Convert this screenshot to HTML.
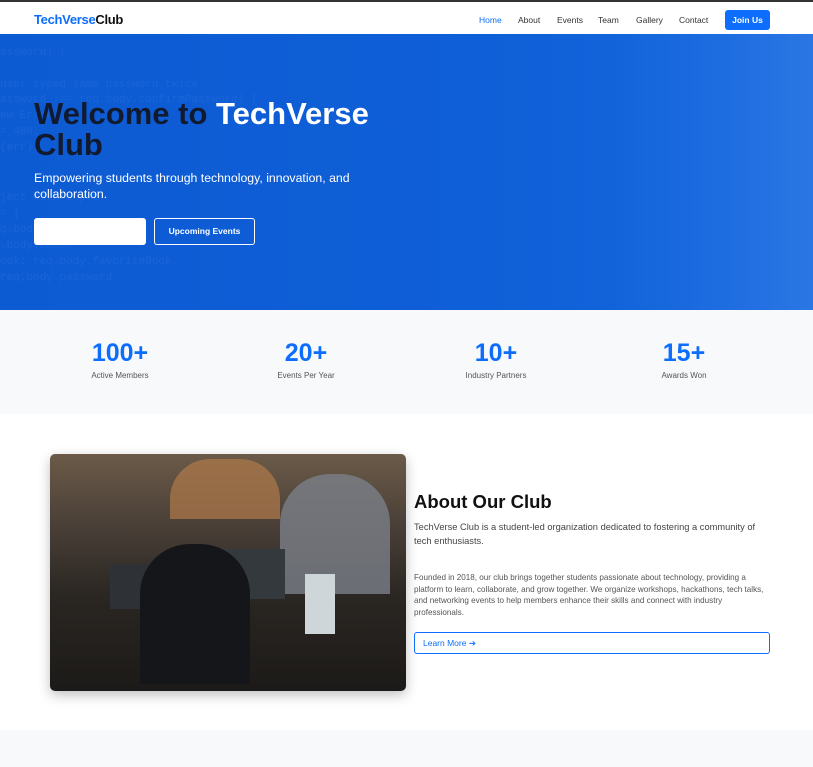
<!DOCTYPE html>
<html><head><style>
*{margin:0;padding:0;box-sizing:border-box}
body{width:813px;height:767px;overflow:hidden;font-family:"Liberation Sans",sans-serif;background:#fff;position:relative}
.top{position:absolute;left:0;top:0;width:813px;height:2px;background:#333}
nav{position:absolute;top:2px;left:0;width:813px;height:32px;background:#fff}
.logo{position:absolute;left:34px;top:10px;font-size:13px;font-weight:bold;color:#111;letter-spacing:-.3px}
.logo span{color:#0d6efd}
.links{position:absolute;top:13px;font-size:8.5px;color:#333}
.join{position:absolute;left:725px;top:8px;width:45px;height:20px;background:#0d6efd;border-radius:3px;color:#fff;font-size:8.5px;font-weight:bold;text-align:center;line-height:20px}
.hero{position:absolute;top:34px;left:0;width:813px;height:276px;background:linear-gradient(90deg,#0d5bd3 0%,#0f5fd8 60%,#1263da 75%,#1d6ce0 88%,#2a76e4 100%)}
.code{position:absolute;left:0;font-family:"Liberation Mono",monospace;font-size:11px;color:rgba(255,255,255,.05)}
h1{position:absolute;left:34px;top:98px;font-size:31px;line-height:31px;color:#111a2e;font-weight:bold}
h1 span{color:#fff}
.sub{position:absolute;left:34px;top:170px;width:350px;font-size:12.3px;line-height:16px;color:#fff}
.b1{position:absolute;left:34px;top:218px;width:112px;height:27px;background:#fff;border-radius:3px}
.b2{position:absolute;left:154px;top:218px;width:101px;height:27px;border:1px solid #fff;border-radius:3px;color:#fff;font-size:8.5px;font-weight:bold;text-align:center;line-height:25px}
.stats{position:absolute;top:310px;left:0;width:813px;height:104px;background:#f8f9fb}
.st{position:absolute;top:29px;width:160px;text-align:center}
.st b{display:block;font-size:25px;color:#0d6efd;line-height:28px}
.st i{display:block;font-style:normal;font-size:8px;color:#555;margin-top:4px}
.img{position:absolute;left:50px;top:454px;width:356px;height:237px;border-radius:5px;box-shadow:0 4px 12px rgba(0,0,0,.25);overflow:hidden;background:linear-gradient(180deg,#6b5a48 0%,#4a4038 30%,#2a2622 60%,#1c1a18 100%)}
h2{position:absolute;left:414px;top:491px;font-size:18.5px;color:#111;font-weight:bold}
.p1{position:absolute;left:414px;top:520px;width:360px;font-size:9.3px;line-height:14px;color:#444}
.p2{position:absolute;left:414px;top:572px;width:356px;font-size:8.1px;line-height:11.6px;color:#555}
.lm{position:absolute;left:414px;top:632px;width:356px;height:22px;border:1px solid #0d6efd;border-radius:3px;font-size:8.5px;color:#0d6efd;line-height:20px;padding-left:8px}
.foot{position:absolute;top:730px;left:0;width:813px;height:37px;background:#f8f9fb}
</style></head><body>
<div class="top"></div>
<nav><div class="logo"><span>TechVerse</span>Club</div>
<div class="links" style="left:479px;color:#0d6efd">Home</div>
<div class="links" style="left:518px">About</div>
<div class="links" style="left:557px">Events</div>
<div class="links" style="left:598px">Team</div>
<div class="links" style="left:636px">Gallery</div>
<div class="links" style="left:679px">Contact</div>
<div class="join">Join Us</div></nav>
<div class="hero">
<div class="code" style="top:13px">assword) {</div>
<div class="code" style="top:45px">  user typed same password twice</div>
<div class="code" style="top:60px">assword !== req.body.confirmPassword) {</div>
<div class="code" style="top:76px">ew Error</div>
<div class="code" style="top:92px">= 400;</div>
<div class="code" style="top:108px">(err);</div>
<div class="code" style="top:158px">ject with input</div>
<div class="code" style="top:174px">= {</div>
<div class="code" style="top:190px">q.body</div>
<div class="code" style="top:206px">.body.name,</div>
<div class="code" style="top:222px">ook: req.body.favoriteBook,</div>
<div class="code" style="top:238px">  req.body.password</div>
</div>
<h1>Welcome to <span>TechVerse</span><br>Club</h1>
<div class="sub">Empowering students through technology, innovation, and collaboration.</div>
<div class="b1"></div><div class="b2">Upcoming Events</div>
<div class="stats">
<div class="st" style="left:40px"><b>100+</b><i>Active Members</i></div>
<div class="st" style="left:226px"><b>20+</b><i>Events Per Year</i></div>
<div class="st" style="left:416px"><b>10+</b><i>Industry Partners</i></div>
<div class="st" style="left:604px"><b>15+</b><i>Awards Won</i></div>
</div>
<div class="img">
<div style="position:absolute;left:120px;top:5px;width:110px;height:60px;background:#b07a4a;border-radius:40px 40px 0 0;opacity:.7"></div>
<div style="position:absolute;left:230px;top:20px;width:110px;height:120px;background:#7a8088;border-radius:50px 50px 0 0;opacity:.8"></div>
<div style="position:absolute;left:60px;top:110px;width:70px;height:45px;background:#2e3236"></div>
<div style="position:absolute;left:175px;top:95px;width:60px;height:50px;background:#34393d"></div>
<div style="position:absolute;left:255px;top:120px;width:30px;height:60px;background:#cfd6da"></div>
<div style="position:absolute;left:90px;top:90px;width:110px;height:140px;background:#15161a;border-radius:50px 50px 0 0"></div>
</div>
<h2>About Our Club</h2>
<div class="p1">TechVerse Club is a student-led organization dedicated to fostering a community of tech enthusiasts.</div>
<div class="p2">Founded in 2018, our club brings together students passionate about technology, providing a platform to learn, collaborate, and grow together. We organize workshops, hackathons, tech talks, and networking events to help members enhance their skills and connect with industry professionals.</div>
<div class="lm">Learn More ➔</div>
<div class="foot"></div>
</body></html>
